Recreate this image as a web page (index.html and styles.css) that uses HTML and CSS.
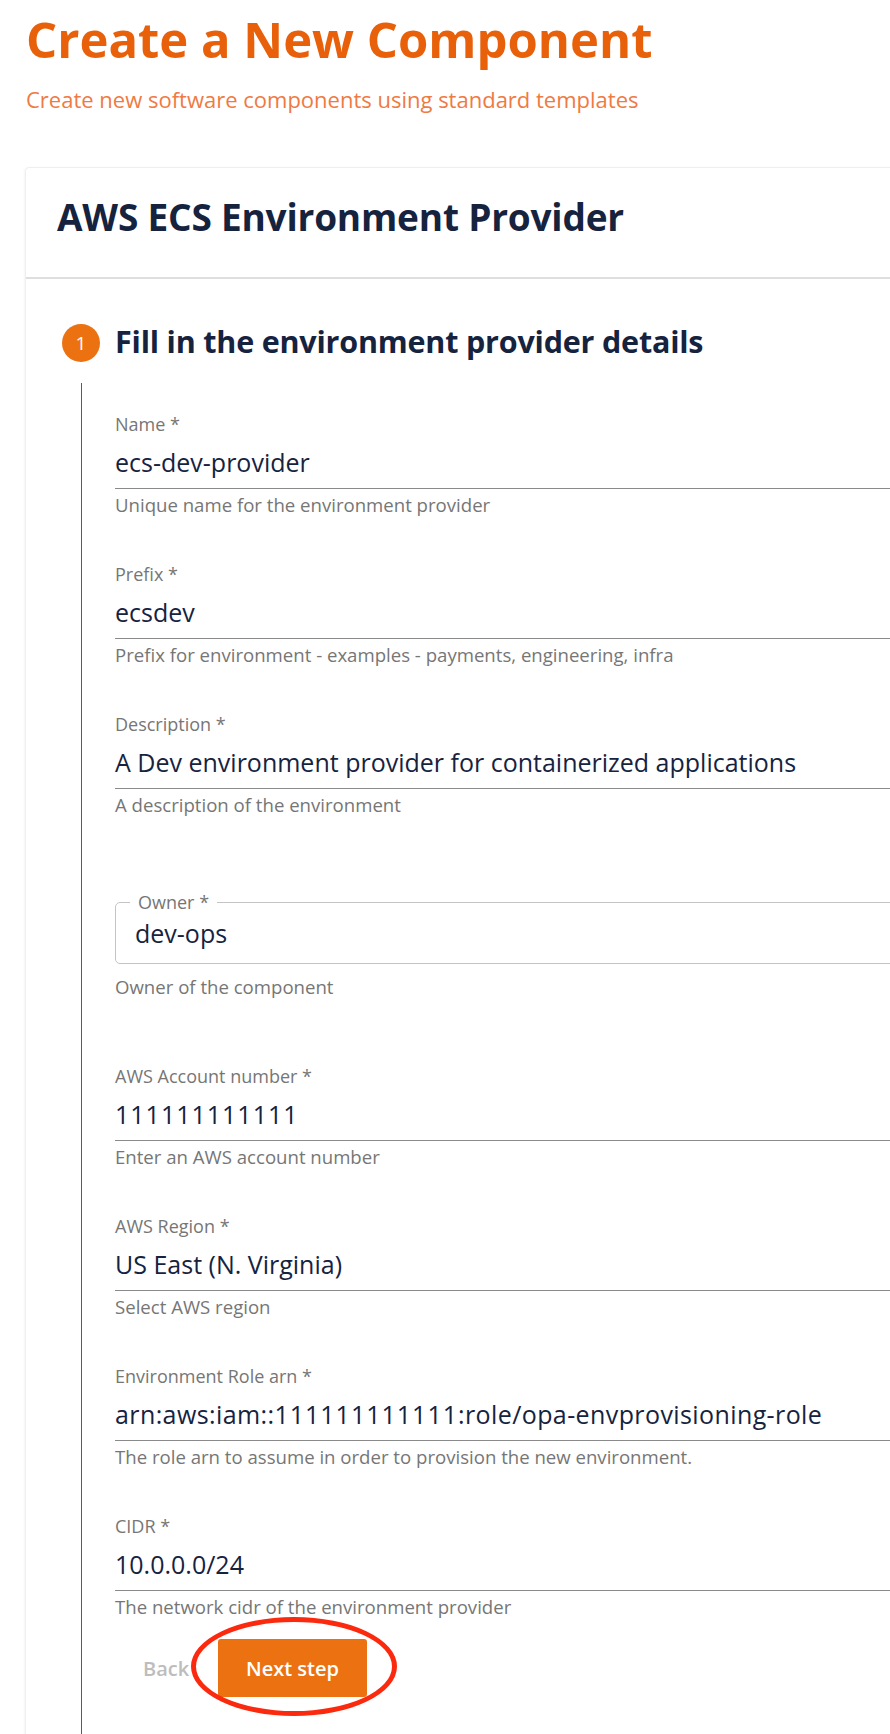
FILE: index.html
```html
<!DOCTYPE html>
<html lang="en">
<head>
<meta charset="utf-8">
<title>Create a New Component</title>
<link rel="stylesheet" href="styles.css">
</head>
<body>
<div class="page">
  <header class="page-header">
    <h1 class="page-title">Create a New Component</h1>
    <p class="page-subtitle">Create new software components using standard templates</p>
  </header>

  <section class="card">
    <div class="card-header">
      <h2 class="card-title">AWS ECS Environment Provider</h2>
    </div>
    <div class="card-body">
      <div class="step-head">
        <span class="step-badge">1</span>
        <h3 class="step-title">Fill in the environment provider details</h3>
      </div>
      <div class="step-content">
        <div class="field">
          <div class="field-label">Name *</div>
          <div class="field-value">ecs-dev-provider</div>
          <div class="field-help">Unique name for the environment provider</div>
        </div>
        <div class="field">
          <div class="field-label">Prefix *</div>
          <div class="field-value">ecsdev</div>
          <div class="field-help">Prefix for environment - examples - payments, engineering, infra</div>
        </div>
        <div class="field">
          <div class="field-label">Description *</div>
          <div class="field-value">A Dev environment provider for containerized applications</div>
          <div class="field-help">A description of the environment</div>
        </div>
        <div class="field field-outlined">
          <fieldset class="outline">
            <legend class="outline-label">Owner *</legend>
            <div class="outline-value">dev-ops</div>
          </fieldset>
          <div class="field-help outline-help">Owner of the component</div>
        </div>
        <div class="field">
          <div class="field-label">AWS Account number *</div>
          <div class="field-value"><span class="digits">111111111111</span></div>
          <div class="field-help">Enter an AWS account number</div>
        </div>
        <div class="field">
          <div class="field-label">AWS Region *</div>
          <div class="field-value">US East (N. Virginia)</div>
          <div class="field-help">Select AWS region</div>
        </div>
        <div class="field">
          <div class="field-label">Environment Role arn *</div>
          <div class="field-value field-arn">arn:aws:iam::<span class="digits">111111111111</span>:role/opa-envprovisioning-role</div>
          <div class="field-help">The role arn to assume in order to provision the new environment.</div>
        </div>
        <div class="field">
          <div class="field-label">CIDR *</div>
          <div class="field-value">10.0.0.0/24</div>
          <div class="field-help">The network cidr of the environment provider</div>
        </div>
        <div class="actions">
          <button class="btn btn-back" type="button">Back</button>
          <button class="btn btn-next" type="button">Next step</button>
          <span class="annotation" aria-hidden="true"></span>
        </div>
      </div>
    </div>
  </section>
</div>
</body>
</html>
```

FILE: styles.css
```css
* { box-sizing: border-box; }

html, body {
  margin: 0;
  padding: 0;
  background: #ffffff;
}

body {
  font-family: "Open Sans", "Noto Sans", "DejaVu Sans", sans-serif;
  color: #16233f;
}

.page {
  width: 890px;
  height: 1734px;
  overflow: hidden;
}

.page-header {
  padding: 9px 0 0 26px;
}

.page-title {
  margin: 0;
  font-size: 49px;
  line-height: 60px;
  font-weight: 700;
  color: #e8610a;
}

.page-subtitle {
  margin: 16px 0 0 0;
  font-size: 22px;
  line-height: 28px;
  font-weight: 400;
  color: #ef7a42;
}

.card {
  margin: 54px -120px 0 25px;
  background: #ffffff;
  border: 1px solid #efefef;
  border-radius: 4px;
  box-shadow: 0 1px 3px rgba(0, 0, 0, 0.08);
}

.card-header {
  padding: 26px 32px 37px 31px;
  border-bottom: 2px solid #dedede;
}

.card-title {
  margin: 0;
  font-size: 37px;
  line-height: 46px;
  font-weight: 700;
  letter-spacing: -0.2px;
  color: #16233f;
}

.card-body {
  padding: 45px 0 0 36px;
}

.step-head {
  display: flex;
  align-items: flex-start;
  gap: 15px;
}

.step-badge {
  flex: none;
  width: 38px;
  height: 38px;
  border-radius: 50%;
  background: #ec7211;
  color: #ffffff;
  font-size: 19px;
  line-height: 38px;
  text-align: center;
}

.step-title {
  margin: -2px 0 0 0;
  font-size: 30.5px;
  line-height: 38px;
  font-weight: 700;
  letter-spacing: -0.2px;
  color: #16233f;
}

.step-content {
  margin: 21px 0 0 19px;
  padding: 29px 0 120px 33px;
  border-left: 1px solid #4e5c7c;
}

.field {
  margin-bottom: 45px;
}

.field-label {
  font-size: 18px;
  line-height: 24px;
  color: #767676;
}

.field-value {
  margin-top: 10px;
  padding-bottom: 10px;
  font-size: 25px;
  line-height: 32px;
  color: #16233f;
  border-bottom: 1px solid #8a8a8a;
  white-space: nowrap;
}

.digits {
  letter-spacing: 1px;
}

.field-arn {
  letter-spacing: 0.4px;
}

.field-help {
  margin-top: 4px;
  font-size: 18.6px;
  line-height: 24px;
  color: #767676;
}

.field-outlined {
  margin-top: 73px;
  margin-bottom: 65px;
}

.outline {
  margin: 0;
  padding: 0 0 14px 14px;
  border: 1px solid #c4c4c4;
  border-radius: 5px;
  min-width: 0;
}

.outline-label {
  padding: 0 8px;
  font-size: 18px;
  line-height: 24px;
  color: #767676;
}

.outline-value {
  margin-top: 3px;
  padding-left: 5px;
  font-size: 25px;
  line-height: 32px;
  color: #16233f;
}

.outline-help {
  margin-top: 11px;
}

.actions {
  position: relative;
  display: flex;
  align-items: center;
  margin-top: -25px;
  height: 58px;
}

.btn {
  font-family: inherit;
  font-size: 20px;
  font-weight: 600;
  border: none;
  border-radius: 3px;
  cursor: pointer;
}

.btn-back {
  width: 103px;
  height: 58px;
  padding: 0 0 0 28px;
  text-align: left;
  background: transparent;
  color: #bdbdbd;
}

.btn-next {
  width: 149px;
  height: 58px;
  padding: 0;
  background: #ec7211;
  color: #ffffff;
}

.annotation {
  position: absolute;
  left: 76px;
  top: -22px;
  width: 206px;
  height: 99px;
  border: 5px solid #fb2a0e;
  border-radius: 50%;
  pointer-events: none;
}
```
